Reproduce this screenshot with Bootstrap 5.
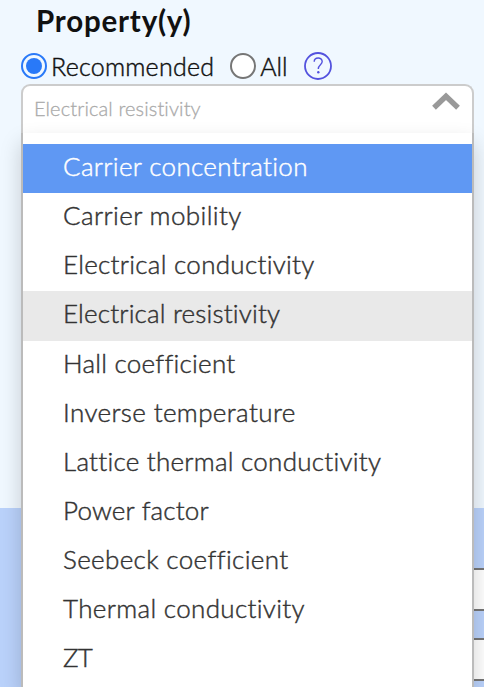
<!DOCTYPE html>
<html lang="en">
<head>
<meta charset="utf-8">
<meta name="viewport" content="width=device-width, initial-scale=1">
<title>Property</title>
<link href="https://cdn.jsdelivr.net/npm/bootstrap@5.3.0/dist/css/bootstrap.min.css" rel="stylesheet">
<style>
body{font-family:Lato,"Liberation Sans",sans-serif;background:#f0f8ff;color:#111;font-variant-ligatures:none}
.filter-panel{height:508px;padding:3px 10px 0 21px}
.panel-title{font-size:29.5px;line-height:36px;font-weight:700;padding-left:15px;letter-spacing:.8px}
.choices{height:45px;padding-top:9px;font-size:25px;line-height:36px}
.choices .form-check-input{width:26px;height:26px;margin:0;border:2px solid #767676;box-shadow:none;flex:none}
.choices .form-check-input:checked{padding:3px;border-color:#2979f8;background:#2979f8 content-box}
.choices label{margin:0 16px 0 4px;font-weight:300;-webkit-text-stroke:.45px;letter-spacing:.24px}
.choices label+input+label{letter-spacing:0}
.help-icon{width:28px;height:28px}
.picker-field{height:49px;background:#fff;border:2px solid #ccc;border-bottom:0;border-radius:9px 9px 0 0;padding:0 12px 0 11px;color:#aaa;font-size:20px;font-weight:300;-webkit-text-stroke:.3px;letter-spacing:.12px}
.picker-field span{line-height:45px}
.chevron{margin-top:5px}
.picker-menu{top:49px;height:554px;background:#fff;border:solid #bbb;border-width:0 2px;padding-top:11px;box-shadow:0 10px 20px rgba(0,0,0,.18)}
.picker-menu li{height:49.15px;line-height:45px;padding-left:40px;font-size:26px;font-weight:300;-webkit-text-stroke:.45px;color:#333;white-space:nowrap;letter-spacing:.33px}
.picker-menu li.is-active{background:#5f98f3;color:#fff}
.picker-menu li.is-chosen{background:#e9e9e9}
.picker-menu li:nth-child(2),.picker-menu li:nth-child(6){letter-spacing:.38px}
.picker-menu li:nth-child(3){letter-spacing:.28px}
.picker-menu li:nth-child(4),.picker-menu li:nth-child(8){letter-spacing:.18px}
.picker-menu li:nth-child(5),.picker-menu li:nth-child(7){letter-spacing:.25px}
.picker-menu li:nth-child(9){letter-spacing:.36px}
.picker-menu li:nth-child(11){letter-spacing:-.8px}
.values-panel{height:179px;background:#bad2fb;padding:60px 0 0 240px}
.values-panel .form-control{width:300px;height:43px;border:2px solid #767676;border-radius:0;margin-bottom:27px}
</style>
<script src="https://cdn.jsdelivr.net/npm/bootstrap@5.3.0/dist/js/bootstrap.bundle.min.js"></script>
</head>
<body class="overflow-hidden">
<section class="filter-panel">
  <h2 class="panel-title m-0">Property(y)</h2>
  <div class="choices d-flex align-items-center">
    <input class="form-check-input" type="radio" name="scope" id="rec" checked><label for="rec">Recommended</label>
    <input class="form-check-input" type="radio" name="scope" id="all"><label for="all">All</label>
    <svg class="help-icon" viewBox="0 0 28 28" fill="none" stroke="#5352de"><circle cx="14" cy="14" r="13" stroke-width="1.8"/><path d="M10.2 9.8C10.2 4.7 18.2 4.7 18.2 9.6C18.2 12.8 14.3 12.8 14.3 17" stroke-width="1.4"/><circle cx="14.3" cy="20.2" r="1.2" fill="#5352de" stroke="none"/></svg>
  </div>
  <div class="position-relative">
    <div class="picker-field d-flex align-items-start justify-content-between"><span>Electrical resistivity</span>
      <svg class="chevron" width="28" height="20" viewBox="0 0 28 20" fill="none" stroke="#999" stroke-width="5.4"><path d="M2 16.8L14 5.2L26 16.8"/></svg></div>
    <ul class="picker-menu list-unstyled position-absolute start-0 end-0 m-0">
      <li class="is-active">Carrier concentration</li>
      <li>Carrier mobility</li>
      <li>Electrical conductivity</li>
      <li class="is-chosen">Electrical resistivity</li>
      <li>Hall coefficient</li>
      <li>Inverse temperature</li>
      <li>Lattice thermal conductivity</li>
      <li>Power factor</li>
      <li>Seebeck coefficient</li>
      <li>Thermal conductivity</li>
      <li>ZT</li>
    </ul>
  </div>
</section>
<section class="values-panel overflow-hidden"><input class="form-control" type="text"><input class="form-control" type="text"></section>
</body>
</html>
